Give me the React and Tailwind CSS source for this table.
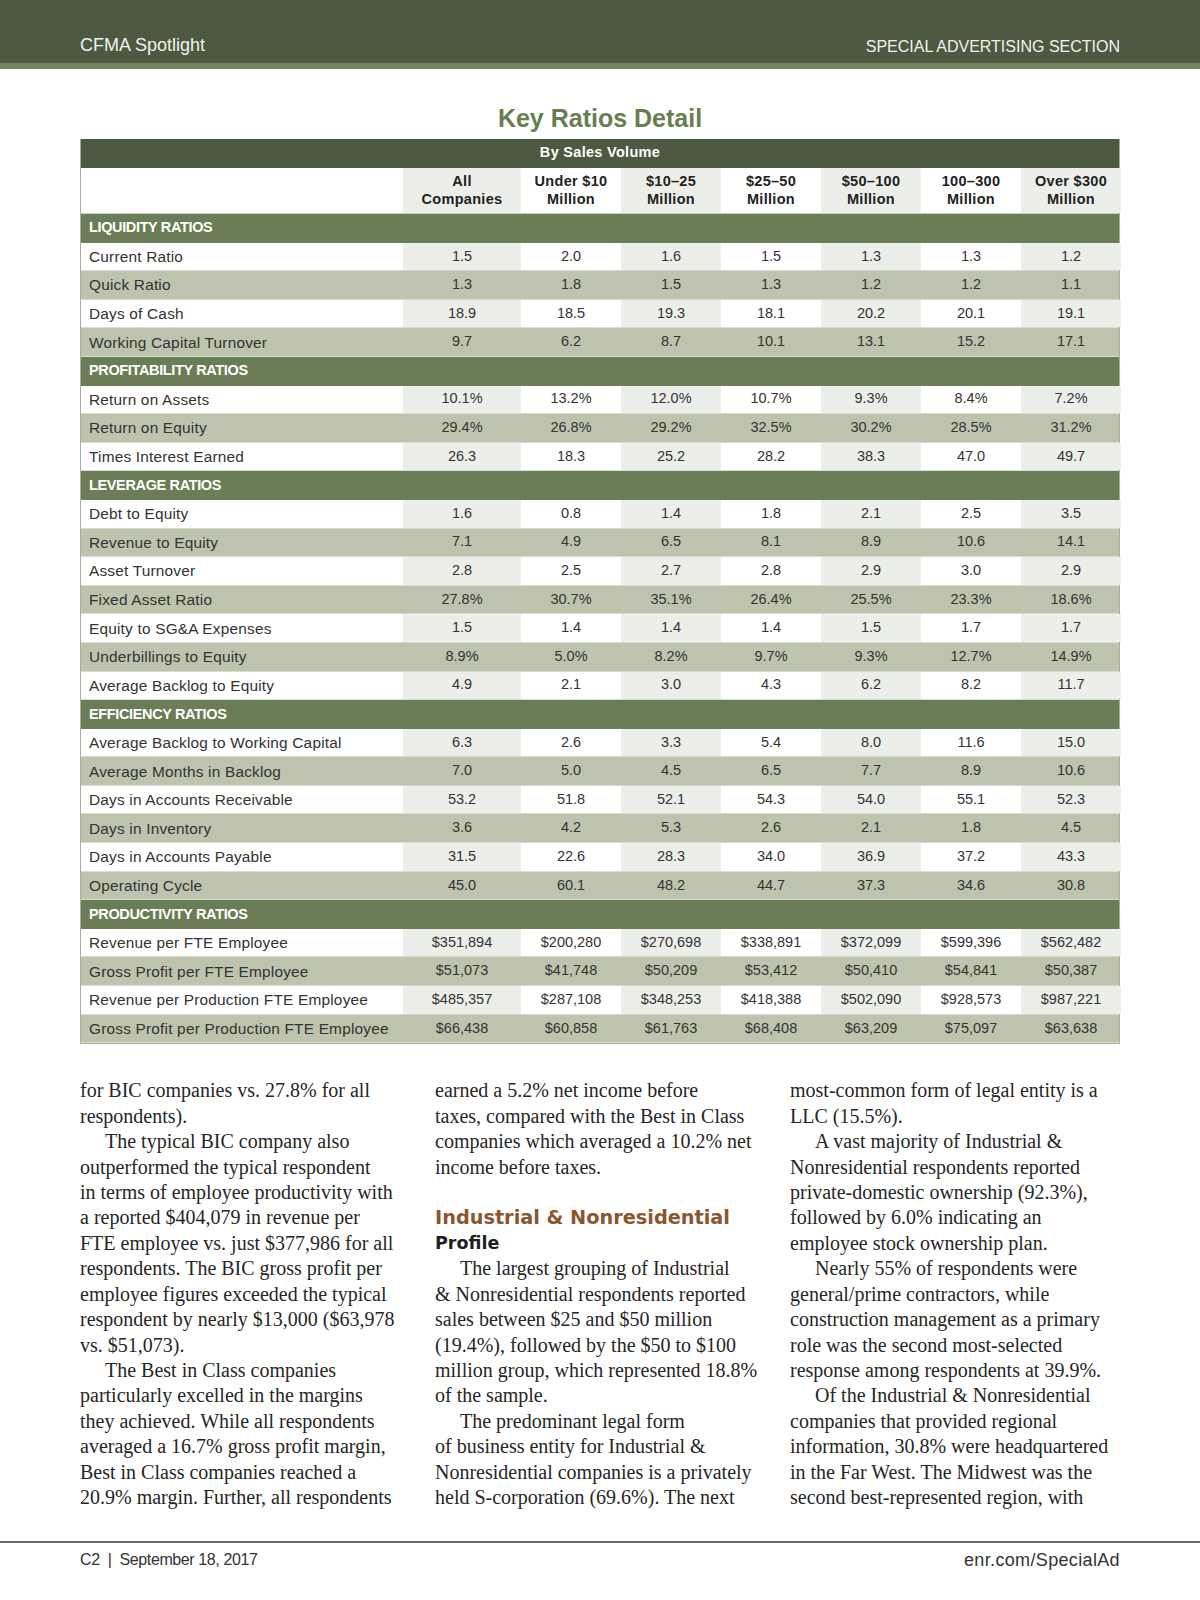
import React from "react";

const sections = [
  {
    title: "LIQUIDITY RATIOS",
    rows: [
      ["Current Ratio", "1.5", "2.0", "1.6", "1.5", "1.3", "1.3", "1.2"],
      ["Quick Ratio", "1.3", "1.8", "1.5", "1.3", "1.2", "1.2", "1.1"],
      ["Days of Cash", "18.9", "18.5", "19.3", "18.1", "20.2", "20.1", "19.1"],
      ["Working Capital Turnover", "9.7", "6.2", "8.7", "10.1", "13.1", "15.2", "17.1"],
    ],
  },
  {
    title: "PROFITABILITY RATIOS",
    rows: [
      ["Return on Assets", "10.1%", "13.2%", "12.0%", "10.7%", "9.3%", "8.4%", "7.2%"],
      ["Return on Equity", "29.4%", "26.8%", "29.2%", "32.5%", "30.2%", "28.5%", "31.2%"],
      ["Times Interest Earned", "26.3", "18.3", "25.2", "28.2", "38.3", "47.0", "49.7"],
    ],
  },
  {
    title: "LEVERAGE RATIOS",
    rows: [
      ["Debt to Equity", "1.6", "0.8", "1.4", "1.8", "2.1", "2.5", "3.5"],
      ["Revenue to Equity", "7.1", "4.9", "6.5", "8.1", "8.9", "10.6", "14.1"],
      ["Asset Turnover", "2.8", "2.5", "2.7", "2.8", "2.9", "3.0", "2.9"],
      ["Fixed Asset Ratio", "27.8%", "30.7%", "35.1%", "26.4%", "25.5%", "23.3%", "18.6%"],
      ["Equity to SG&A Expenses", "1.5", "1.4", "1.4", "1.4", "1.5", "1.7", "1.7"],
      ["Underbillings to Equity", "8.9%", "5.0%", "8.2%", "9.7%", "9.3%", "12.7%", "14.9%"],
      ["Average Backlog to Equity", "4.9", "2.1", "3.0", "4.3", "6.2", "8.2", "11.7"],
    ],
  },
  {
    title: "EFFICIENCY RATIOS",
    rows: [
      ["Average Backlog to Working Capital", "6.3", "2.6", "3.3", "5.4", "8.0", "11.6", "15.0"],
      ["Average Months in Backlog", "7.0", "5.0", "4.5", "6.5", "7.7", "8.9", "10.6"],
      ["Days in Accounts Receivable", "53.2", "51.8", "52.1", "54.3", "54.0", "55.1", "52.3"],
      ["Days in Inventory", "3.6", "4.2", "5.3", "2.6", "2.1", "1.8", "4.5"],
      ["Days in Accounts Payable", "31.5", "22.6", "28.3", "34.0", "36.9", "37.2", "43.3"],
      ["Operating Cycle", "45.0", "60.1", "48.2", "44.7", "37.3", "34.6", "30.8"],
    ],
  },
  {
    title: "PRODUCTIVITY RATIOS",
    rows: [
      ["Revenue per FTE Employee", "$351,894", "$200,280", "$270,698", "$338,891", "$372,099", "$599,396", "$562,482"],
      ["Gross Profit per FTE Employee", "$51,073", "$41,748", "$50,209", "$53,412", "$50,410", "$54,841", "$50,387"],
      ["Revenue per Production FTE Employee", "$485,357", "$287,108", "$348,253", "$418,388", "$502,090", "$928,573", "$987,221"],
      ["Gross Profit per Production FTE Employee", "$66,438", "$60,858", "$61,763", "$68,408", "$63,209", "$75,097", "$63,638"],
    ],
  },
];

const headers = [
  ["All", "Companies"],
  ["Under $10", "Million"],
  ["$10–25", "Million"],
  ["$25–50", "Million"],
  ["$50–100", "Million"],
  ["100–300", "Million"],
  ["Over $300", "Million"],
];

// body copy, one entry per printed line; "i" = paragraph indent
const col1 = [
  ["for BIC companies vs. 27.8% for all"],
  ["respondents)."],
  ["The typical BIC company also", "i"],
  ["outperformed the typical respondent"],
  ["in terms of employee productivity with"],
  ["a reported $404,079 in revenue per"],
  ["FTE employee vs. just $377,986 for all"],
  ["respondents. The BIC gross profit per"],
  ["employee figures exceeded the typical"],
  ["respondent by nearly $13,000 ($63,978"],
  ["vs. $51,073)."],
  ["The Best in Class companies", "i"],
  ["particularly excelled in the margins"],
  ["they achieved. While all respondents"],
  ["averaged a 16.7% gross profit margin,"],
  ["Best in Class companies reached a"],
  ["20.9% margin. Further, all respondents"],
];

const col2 = [
  ["earned a 5.2% net income before"],
  ["taxes, compared with the Best in Class"],
  ["companies which averaged a 10.2% net"],
  ["income before taxes."],
  [""],
  ["Industrial & Nonresidential", "h"],
  ["Profile", "s"],
  ["The largest grouping of Industrial", "i"],
  ["& Nonresidential respondents reported"],
  ["sales between $25 and $50 million"],
  ["(19.4%), followed by the $50 to $100"],
  ["million group, which represented 18.8%"],
  ["of the sample."],
  ["The predominant legal form", "i"],
  ["of business entity for Industrial &"],
  ["Nonresidential companies is a privately"],
  ["held S-corporation (69.6%). The next"],
];

const col3 = [
  ["most-common form of legal entity is a"],
  ["LLC (15.5%)."],
  ["A vast majority of Industrial &", "i"],
  ["Nonresidential respondents reported"],
  ["private-domestic ownership (92.3%),"],
  ["followed by 6.0% indicating an"],
  ["employee stock ownership plan."],
  ["Nearly 55% of respondents were", "i"],
  ["general/prime contractors, while"],
  ["construction management as a primary"],
  ["role was the second most-selected"],
  ["response among respondents at 39.9%."],
  ["Of the Industrial & Nonresidential", "i"],
  ["companies that provided regional"],
  ["information, 30.8% were headquartered"],
  ["in the Far West. The Midwest was the"],
  ["second best-represented region, with"],
];

const grid = "grid grid-cols-[322px_118px_repeat(6,100px)]";

function Line({ text, kind }) {
  if (kind === "h") {
    return (
      <div className="h-[25.45px] leading-[25.45px] font-['DejaVu_Sans',sans-serif] font-bold text-[19.3px] text-[#8a5630] whitespace-nowrap">
        {text}
      </div>
    );
  }
  if (kind === "s") {
    return (
      <div className="h-[25.45px] leading-[25.45px] font-['DejaVu_Sans',sans-serif] font-bold text-[17.5px] text-[#1f1f1f] whitespace-nowrap">
        {text}
      </div>
    );
  }
  return (
    <div className={`h-[25.45px] leading-[25.45px] whitespace-nowrap ${kind === "i" ? "pl-[25px]" : ""}`}>
      {text || "\u00a0"}
    </div>
  );
}

function Column({ lines }) {
  return (
    <div className="w-[320px] font-['Liberation_Serif','Times_New_Roman',serif] text-[20px] text-[#262626]">
      {lines.map((l, i) => (
        <Line key={i} text={l[0]} kind={l[1]} />
      ))}
    </div>
  );
}

function SectionRow({ title }) {
  return (
    <div className="h-[28.6px] bg-[#6b7d56] flex items-center pl-[8px] text-white font-bold text-[14.5px] tracking-tight">
      {title}
    </div>
  );
}

function DataRow({ row, shaded }) {
  const [label, ...vals] = row;
  return (
    <div className={`${grid} h-[28.6px] text-[14.5px] text-[#333] ${shaded ? "bg-[#bec3ae]" : "bg-white"} border-b border-[#d9dcd2]`}>
      <div className="flex items-center pl-[8px] whitespace-nowrap text-[15.4px] tracking-[0.2px]">{label}</div>
      {vals.map((v, i) => (
        <div
          key={i}
          className={`flex items-center justify-center ${!shaded && i % 2 === 0 ? "bg-[#eceee9]" : ""}`}
        >
          {v}
        </div>
      ))}
    </div>
  );
}

export default function App() {
  return (
    <div className="w-[1200px] h-[1600px] bg-white font-['Liberation_Sans',Arial,sans-serif] overflow-hidden">
      {/* top band */}
      <div className="h-[63px] bg-[#4e5941] flex items-end justify-between px-[80px] pb-[4px] text-[#f1f2ec]">
        <span className="text-[18px]">CFMA Spotlight</span>
        <span className="text-[16px]">SPECIAL ADVERTISING SECTION</span>
      </div>
      <div className="h-[6px] bg-[#71845c]" />

      <h1 className="mt-[34px] text-center text-[25px] leading-[30px] font-bold text-[#687d50]">
        Key Ratios Detail
      </h1>

      {/* table */}
      <div className="mt-[6px] mx-[80px] w-[1040px] border-b border-x border-[#a9ae9c]">
        <div className="h-[28.5px] bg-[#4e5941] flex items-center justify-center text-white font-bold text-[14.5px] tracking-[0.3px]">
          By Sales Volume
        </div>
        <div className={`${grid} h-[46.5px] bg-white border-b border-[#c9cdbf]`}>
          <div />
          {headers.map((h, i) => (
            <div
              key={i}
              className={`flex flex-col items-center justify-center text-[14.5px] leading-[18px] font-bold tracking-[0.3px] text-[#222] ${i % 2 === 0 ? "bg-[#eceee9]" : ""}`}
            >
              <span>{h[0]}</span>
              <span>{h[1]}</span>
            </div>
          ))}
        </div>
        {sections.map((s) => (
          <React.Fragment key={s.title}>
            <SectionRow title={s.title} />
            {s.rows.map((r, i) => (
              <DataRow key={r[0]} row={r} shaded={i % 2 === 1} />
            ))}
          </React.Fragment>
        ))}
      </div>

      {/* body copy */}
      <div className="mt-[34px] px-[80px] flex gap-[35px]">
        <Column lines={col1} />
        <Column lines={col2} />
        <Column lines={col3} />
      </div>

      {/* footer */}
      <div className="mt-[30px] h-[2px] bg-[#6a6a6a]" />
      <div className="px-[80px] pt-[4px] flex justify-between items-center text-[#333]">
        <span className="text-[16px] tracking-[-0.4px]">C2&nbsp;&nbsp;|&nbsp;&nbsp;September 18, 2017</span>
        <span className="text-[18px] tracking-[0.35px]">enr.com/SpecialAd</span>
      </div>
    </div>
  );
}
